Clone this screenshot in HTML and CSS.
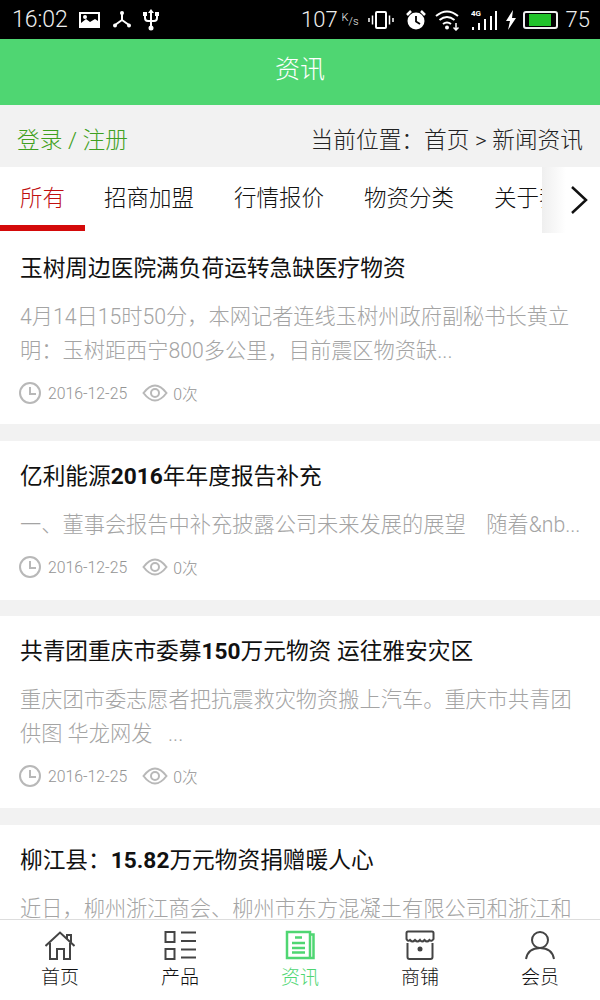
FILE: index.html
```html
<!DOCTYPE html>
<html lang="zh-CN">
<head>
    <meta charset="UTF-8">
    <meta name="viewport" content="width=device-width, initial-scale=1.0">
    <title>资讯</title>
    <link rel="stylesheet" href="styles.css">
</head>
<body>
    <div class="phone">
        <div class="status-bar">
            <div class="status-left">
                <span class="clock">16:02</span>
                <svg width="22" height="18" viewBox="0 0 22 18"><path fill="#fff" fill-rule="evenodd" d="M0 1h21v16H0zM2 3v9l5-4 4 3 5-3 3 2V3z"/><circle cx="6" cy="6" r="2" fill="#fff"/></svg>
                <svg width="20" height="20" viewBox="0 0 20 20"><path stroke="#fff" stroke-width="2" fill="none" d="M10 3v7M10 10l-7 5M10 10l7 5"/><circle cx="10" cy="3" r="2" fill="#fff"/><circle cx="3" cy="15.500" r="2" fill="#fff"/><circle cx="17" cy="15.500" r="2" fill="#fff"/></svg>
                <svg width="16" height="22" viewBox="0 0 16 22"><path stroke="#fff" stroke-width="2" fill="none" d="M8 3v16M2 5v4q0 3 3 3h6q3 0 3-3V5"/><path fill="#fff" d="M8 0l3 4H5z"/><circle cx="8" cy="19" r="2.500" fill="#fff"/><rect x="0" y="3" width="4" height="4" fill="#fff"/><rect x="12" y="3" width="4" height="4" fill="#fff"/></svg>
            </div>
            <div class="status-right">
                <span class="clock level">107</span>
                <span class="speed"><span class="speed-k">K</span>/s</span>
                <svg class="st-vib" width="26" height="20" viewBox="0 0 26 20"><rect x="8" y="2" width="10" height="16" rx="1" fill="none" stroke="#fff" stroke-width="2"/><path stroke="#fff" stroke-width="1.500" d="M1 8v4M4.500 5.500v9M21.500 5.500v9M25 8v4"/></svg>
                <svg class="st-alarm" width="22" height="22" viewBox="0 0 22 22"><circle cx="11" cy="12" r="8.500" fill="#fff"/><path stroke="#000" stroke-width="1.800" fill="none" d="M11 7v5.500l4 2.500"/><path stroke="#fff" stroke-width="2.500" d="M2 6l4-4M20 6l-4-4"/></svg>
                <svg width="26" height="22" viewBox="0 0 26 22"><path fill="none" stroke="#fff" stroke-width="2" d="M1 7q11-9 22 0M4.500 11q7.500-6 15 0M8 15q4-3 8 0"/><circle cx="12" cy="18.500" r="2" fill="#fff"/><path stroke="#fff" stroke-width="1.500" d="M21 14v7M18.500 18.500l2.500 2.500 2.500-2.500" fill="none"/></svg>
                <svg class="st-signal" width="26" height="22" viewBox="0 0 26 22"><text x="0" y="7" class="net-label">4G</text><path stroke="#fff" stroke-width="2" d="M2 21v-3M8 21v-7M14 21v-11M20 21v-14M25 21V2"/></svg>
                <svg width="12" height="20" viewBox="0 0 12 20"><path fill="#fff" d="M8 0L1 11h4l-2 9 8-12H7z"/></svg>
                <div class="battery"><div class="battery-fill"></div></div>
                <span class="clock level">75</span>
            </div>
        </div>

        <div class="top-title">资讯</div>

        <div class="crumb-bar">
            <a class="login">登录 / 注册</a>
            <span class="crumb">当前位置：首页 &gt; 新闻资讯</span>
        </div>

        <div class="tabs">
            <div class="tab-list">
                <a class="tab active">所有</a>
                <a class="tab">招商加盟</a>
                <a class="tab">行情报价</a>
                <a class="tab">物资分类</a>
                <a class="tab">关于我们</a>
            </div>
            <div class="tab-more">
                <svg width="20" height="30" viewBox="0 0 20 30"><path d="M3 2l14 13L3 28" fill="none" stroke="#111" stroke-width="2.500"/></svg>
            </div>
        </div>

        <div class="news">
            <div class="card card-first">
                <h3>玉树周边医院满负荷运转急缺医疗物资</h3>
                <p>4月14日15时50分，本网记者连线玉树州政府副秘书长黄立明：玉树距西宁800多公里，目前震区物资缺...</p>
                <div class="meta">
                    <svg width="24" height="24" viewBox="0 0 24 24"><circle cx="12" cy="12" r="10" class="ico"/><path class="ico" d="M12 6v7h6"/></svg>
                    <span class="date">2016-12-25</span>
                    <svg width="26" height="18" viewBox="0 0 26 18"><path class="ico" d="M1.500 9Q13-6 24.500 9 13 24 1.500 9z"/><circle class="ico" cx="13" cy="9" r="4"/></svg>
                    <span class="views">0次</span>
                </div>
            </div>
            <div class="card card-short">
                <h3>亿利能源<b>2016</b>年年度报告补充</h3>
                <p class="single">一、董事会报告中补充披露公司未来发展的展望&nbsp;&nbsp;&nbsp;&nbsp;随着&amp;nb...</p>
                <div class="meta">
                    <svg width="24" height="24" viewBox="0 0 24 24"><circle cx="12" cy="12" r="10" class="ico"/><path class="ico" d="M12 6v7h6"/></svg>
                    <span class="date">2016-12-25</span>
                    <svg width="26" height="18" viewBox="0 0 26 18"><path class="ico" d="M1.500 9Q13-6 24.500 9 13 24 1.500 9z"/><circle class="ico" cx="13" cy="9" r="4"/></svg>
                    <span class="views">0次</span>
                </div>
            </div>
            <div class="card">
                <h3>共青团重庆市委募<b>150</b>万元物资 运往雅安灾区</h3>
                <p>重庆团市委志愿者把抗震救灾物资搬上汽车。重庆市共青团供图 华龙网发&nbsp;&nbsp;&nbsp;...</p>
                <div class="meta">
                    <svg width="24" height="24" viewBox="0 0 24 24"><circle cx="12" cy="12" r="10" class="ico"/><path class="ico" d="M12 6v7h6"/></svg>
                    <span class="date">2016-12-25</span>
                    <svg width="26" height="18" viewBox="0 0 26 18"><path class="ico" d="M1.500 9Q13-6 24.500 9 13 24 1.500 9z"/><circle class="ico" cx="13" cy="9" r="4"/></svg>
                    <span class="views">0次</span>
                </div>
            </div>
            <div class="card">
                <h3>柳江县：<b>15.82</b>万元物资捐赠暖人心</h3>
                <p>近日，柳州浙江商会、柳州市东方混凝土有限公司和浙江和</p>
            </div>
        </div>

        <nav class="bottom-nav">
            <a class="nav-item">
                <svg width="30" height="30" viewBox="0 0 30 30"><path class="nav-ico" d="M0.500 16L15 2.500 29.500 16M5 13v16h7V19h7v10h6V13M22 9V5h4v7"/></svg>
                首页
            </a>
            <a class="nav-item">
                <svg width="32" height="30" viewBox="0 0 32 30"><path class="nav-ico" d="M1.500 2h9v10h-9zM1.500 19h9v10h-9zM17 2.500h15M17 11h15M17 19.500h15M17 27.500h15"/></svg>
                产品
            </a>
            <a class="nav-item current">
                <svg width="30" height="30" viewBox="0 0 30 30"><path class="nav-ico" d="M2 2h23v26H2zM25 4.500h3.500V28H25M10 7.500h7M7 13h13M7 18h13M7 22.500h13"/></svg>
                资讯
            </a>
            <a class="nav-item">
                <svg width="30" height="30" viewBox="0 0 30 30"><path class="nav-ico" d="M3 1.500h24q1.500 0 1.500 1.500v6q-2 3-4 1-2.500 3-5 0-2.500 3-4.500 0-2.500 3-5 0-2.500 3-5 0Q3 12 1.500 9V3Q1.500 1.500 3 1.500zM2.500 13v14q0 2 2 2h21q2 0 2-2V13"/><circle cx="15" cy="19" r="2.500" fill="#444"/></svg>
                商铺
            </a>
            <a class="nav-item">
                <svg width="30" height="30" viewBox="0 0 30 30"><circle class="nav-ico" cx="15" cy="10" r="8"/><path class="nav-ico" d="M1 29q2-11 14-11t14 11"/></svg>
                会员
            </a>
        </nav>
    </div>
</body>
</html>
```

FILE: styles.css
```css
/* Global Styles */

* {
    margin: 0;
    padding: 0;
    box-sizing: border-box;
}

body {
    font-family: 'Roboto', 'Noto Sans CJK SC', sans-serif;
    font-weight: 300;
    background-color: #f2f2f2;
    color: #222;
}

.phone {
    position: relative;
    width: 600px;
    height: 1000px;
    overflow: hidden;
    background-color: #f2f2f2;
}

/* Status Bar */

.status-bar {
    height: 39px;
    background-color: #000;
    color: #eee;
    display: flex;
    justify-content: space-between;
    align-items: center;
    padding: 0 10px 0 12px;
}

.status-left, .status-right {
    display: flex;
    align-items: center;
}

.status-left {
    gap: 11px;
}

.status-right {
    gap: 8px;
}

.clock {
    font-size: 23px;
    font-weight: 300;
}

.level {
    font-size: 22px;
}

.speed {
    font-size: 11px;
    width: 16px;
    margin-left: -4px;
    padding-top: 4px;
}

.speed-k {
    position: relative;
    top: -4px;
}

.st-vib {
    margin-left: 2px;
}

.st-alarm {
    margin-left: 3px;
}

.st-signal {
    margin-left: 2px;
}

.net-label {
    font-size: 8px;
    font-weight: 700;
    fill: #fff;
}

.battery {
    width: 35px;
    height: 18px;
    border: 2px solid #eee;
    border-radius: 3px;
    padding: 1px;
    margin-left: -2px;
}

.battery-fill {
    width: 76%;
    height: 100%;
    margin-left: 3px;
    background-color: #22c32a;
}

/* Header */

.top-title {
    height: 66px;
    background-color: #4fd672;
    color: #fff;
    font-size: 25px;
    display: flex;
    align-items: center;
    justify-content: center;
    padding-bottom: 10px;
}

.crumb-bar {
    height: 62px;
    display: flex;
    justify-content: space-between;
    align-items: center;
    padding: 4px 17px 0;
    font-size: 22.700px;
    color: #222;
}

.login {
    color: #3fa020;
}

/* Tabs */

.tabs {
    display: flex;
    height: 64px;
    background-color: #fff;
}

.tab-list {
    width: 542px;
    display: flex;
    overflow: hidden;
    height: 64px;
    flex-shrink: 0;
}

.tab {
    flex-shrink: 0;
    padding: 0 20px;
    font-size: 22.500px;
    line-height: 62px;
    color: #111;
    height: 64px;
    border-bottom: 6px solid transparent;
}

.tab.active {
    color: #c01010;
    border-bottom-color: #d40a0a;
    margin-right: -1px;
}

.tab-more {
    width: 58px;
    height: 66px;
    background: linear-gradient(to right, #efefef, #fff 24px);
    display: flex;
    align-items: center;
    justify-content: flex-end;
    padding-right: 11px;
}

/* News list */

.card {
    background-color: #fff;
    height: 192px;
    padding: 20px 20px 0;
    margin-bottom: 17px;
}

.card-first {
    height: 193px;
    padding-top: 22px;
}

.card-short {
    height: 159px;
    margin-bottom: 16px;
}

.card h3 {
    font-size: 22.700px;
    font-weight: 400;
    color: #111;
    line-height: 32px;
}

.card h3 b {
    font-weight: 700;
}

.card p {
    font-size: 21.230px;
    line-height: 34px;
    color: #a4a4a4;
    margin-top: 15px;
    height: 68px;
    overflow: hidden;
}

.card p.single {
    height: 34px;
    margin-bottom: 5px;
    margin-right: -20px;
    white-space: nowrap;
}

.meta {
    display: flex;
    align-items: center;
    margin-top: 13px;
    font-size: 15.800px;
    color: #949494;
    margin-left: -2px;
}

.date {
    margin: 0 15px 0 6px;
}

.views {
    margin-left: 5px;
}

.ico {
    fill: none;
    stroke: #b8b8b8;
    stroke-width: 2;
}

/* Bottom Nav */

.bottom-nav {
    position: absolute;
    left: 0;
    right: 0;
    bottom: 0;
    height: 81px;
    background-color: #fff;
    border-top: 1px solid #ddd;
    display: flex;
}

.nav-item {
    flex: 1;
    display: flex;
    flex-direction: column;
    align-items: center;
    padding-top: 10px;
    font-size: 19px;
    line-height: 28px;
    gap: 4px;
    color: #111;
}

.nav-ico {
    fill: none;
    stroke: #444;
    stroke-width: 2;
}

.nav-item.current {
    color: #4fd672;
}

.current .nav-ico {
    stroke: #4fd672;
    stroke-width: 2.500;
}
```
